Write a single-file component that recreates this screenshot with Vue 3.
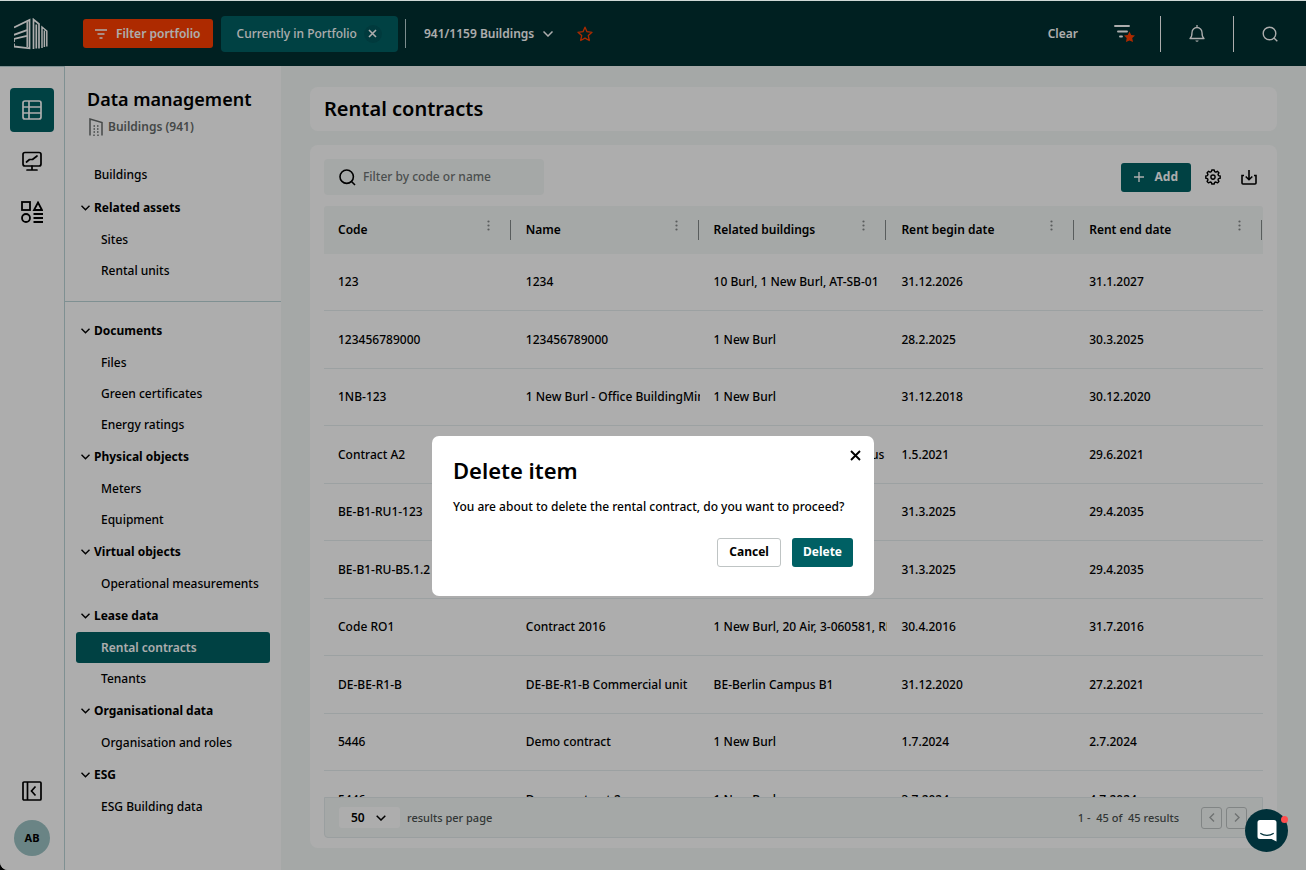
<script setup>
import { ref } from 'vue'

const groupsTop = [
  { title: 'Related assets', items: ['Sites', 'Rental units'] },
]
const groupsBottom = [
  { title: 'Documents', items: ['Files', 'Green certificates', 'Energy ratings'] },
  { title: 'Physical objects', items: ['Meters', 'Equipment'] },
  { title: 'Virtual objects', items: ['Operational measurements'] },
  { title: 'Lease data', items: ['Rental contracts', 'Tenants'] },
  { title: 'Organisational data', items: ['Organisation and roles'] },
  { title: 'ESG', items: ['ESG Building data'] },
]
const active = 'Rental contracts'

const columns = ['Code', 'Name', 'Related buildings', 'Rent begin date', 'Rent end date']
const rows = [
  ['123', '1234', '10 Burl, 1 New Burl, AT-SB-01', '31.12.2026', '31.1.2027'],
  ['123456789000', '123456789000', '1 New Burl', '28.2.2025', '30.3.2025'],
  ['1NB-123', '1 New Burl - Office BuildingMinds', '1 New Burl', '31.12.2018', '30.12.2020'],
  ['Contract A2', 'Contract A2', '1 New Burl, BE-Berlin Campus', '1.5.2021', '29.6.2021'],
  ['BE-B1-RU1-123', 'BE-B1-RU1-123', 'BE-Berlin Campus B1', '31.3.2025', '29.4.2035'],
  ['BE-B1-RU-B5.1.2', 'BE-B1-RU-B5.1.2', 'BE-Berlin Campus B1', '31.3.2025', '29.4.2035'],
  ['Code RO1', 'Contract 2016', '1 New Burl, 20 Air, 3-060581, RE-01', '30.4.2016', '31.7.2016'],
  ['DE-BE-R1-B', 'DE-BE-R1-B Commercial unit', 'BE-Berlin Campus B1', '31.12.2020', '27.2.2021'],
  ['5446', 'Demo contract', '1 New Burl', '1.7.2024', '2.7.2024'],
  ['5446', 'Demo contract 2', '1 New Burl', '3.7.2024', '4.7.2024'],
]
const search = ref('')
const pageSize = ref('50')
</script>

<template>
  <div class="app">
    <header class="topbar">
      <svg class="logo" viewBox="0 0 34 32" width="34" height="32" fill="none" stroke="#fff" stroke-width="1.8">
        <path d="M0 9.500 15.500 2V30.300L0 28.500V25.500" />
        <path d="M13.200 4V29" stroke-width="1.500" />
        <path d="M0 16.800 13 12.200M0 21 13 17.800M0 16V17.500M0 20.500V24" />
        <path d="M19.500 31V1.500L25 6V30.500M22.300 30.500V6.500" stroke-width="1.700" />
        <path d="M28 30V9L32.800 13V28.500M30.400 29V12.500" stroke-width="1.500" />
      </svg>
      <button class="filter-btn" type="button">
        <svg width="12" height="10" viewBox="0 0 12 10" stroke="#fff" stroke-width="1.300" fill="none"><path d="M0 1h12M2.500 5h7M4.500 9h3" /></svg>
        Filter portfolio
      </button>
      <div class="chip">
        <span>Currently in Portfolio</span>
        <button type="button" class="chip-x" aria-label="Remove filter">
          <svg width="9" height="9" viewBox="0 0 9 9" stroke="#fff" stroke-width="1.600"><path d="M1 1l7 7M8 1 1 8" /></svg>
        </button>
      </div>
      <span class="vline short"></span>
      <button class="buildings" type="button">
        941/1159 Buildings
        <svg width="10" height="6" viewBox="0 0 10 6" stroke="#fff" stroke-width="1.500" fill="none"><path d="M.5.5 5 5 9.500.5" /></svg>
      </button>
      <button class="icon-btn star" type="button" aria-label="Favourite">
        <svg width="16" height="16" viewBox="0 0 16 16" stroke="#ff3f00" stroke-width="1.300" fill="none" stroke-linejoin="round"><path d="M8 1.200 10 5.700l5 .6-3.700 3.300 1 4.900L8 12.100l-4.300 2.400 1-4.900L1 6.300l5-.6z" /></svg>
      </button>
      <div class="spacer"></div>
      <button class="clear" type="button">Clear</button>
      <button class="icon-btn saved" type="button" aria-label="Saved filters">
        <svg width="22" height="20" viewBox="0 0 22 20"><path d="M1 2h14M4 7.500h9M6 12.500h2" stroke="#fff" stroke-width="1.900" stroke-linecap="round" /><path d="M15.500 7.500 17.200 11l3.800.5-2.800 2.600.8 3.900-3.500-1.600-3.500 1.600.7-3.900L10 11.500l3.800-.5z" fill="#ff3f00" /></svg>
      </button>
      <span class="vline"></span>
      <button class="icon-btn wide" type="button" aria-label="Notifications">
        <svg width="16" height="18" viewBox="0 0 16 18" fill="none" stroke="#fff" stroke-width="1.300"><path d="M1 13.500c1.600-1.300 2-2.500 2-6a5 5 0 0 1 10 0c0 3.500.4 4.700 2 6zM8 0v2.500" stroke-linejoin="round" /><path d="M6.300 15.500a1.800 1.800 0 0 0 3.400 0z" fill="#fff" stroke="none" /></svg>
      </button>
      <span class="vline"></span>
      <button class="icon-btn wide" type="button" aria-label="Search">
        <svg width="16" height="16" viewBox="0 0 16 16" fill="none" stroke="#fff" stroke-width="1.400"><circle cx="7.500" cy="7.500" r="6.300" /><path d="m12 12 3.300 3.300" /></svg>
      </button>
    </header>

    <div class="body">
      <nav class="rail" aria-label="Modules">
        <a href="#" class="rail-item on" aria-label="Data management">
          <svg width="20" height="20" viewBox="0 0 20 20" fill="none" stroke="#fff" stroke-width="1.700"><rect x="1" y="1" width="18" height="18" rx="2" /><path d="M7 1v18M1 7h18M1 13h18" /></svg>
        </a>
        <a href="#" class="rail-item" aria-label="Dashboards">
          <svg width="20" height="20" viewBox="0 0 20 20" fill="none" stroke="#000" stroke-width="1.700" stroke-linecap="round" stroke-linejoin="round"><rect x="1" y="1.500" width="18" height="13.500" rx="2" /><path d="M10 15v3.500M5 19h10M4.500 11l3-2.500h3L15 5" /></svg>
        </a>
        <a href="#" class="rail-item" aria-label="Apps">
          <svg width="22" height="22" viewBox="0 0 22 22" fill="none" stroke="#000" stroke-width="1.800"><rect x="1" y="1" width="8" height="8" /><path d="M17 1.500 21 9h-8zM12.500 13h9.500M12.500 17h9.500M12.500 21h9.500" /><circle cx="5" cy="17" r="4" /></svg>
        </a>
        <div class="spacer"></div>
        <button type="button" class="rail-item" aria-label="Collapse menu">
          <svg width="20" height="20" viewBox="0 0 20 20" fill="none" stroke="#000" stroke-width="1.700"><rect x="1" y="1" width="18" height="18" rx="1" /><path d="M5.500 1v18M13.500 5.500 9.500 10l4 4.500" /></svg>
        </button>
        <button type="button" class="avatar">AB</button>
      </nav>

      <aside class="side">
        <h2>Data management</h2>
        <p class="count">
          <svg width="14" height="18" viewBox="0 0 14 18" fill="none" stroke="#666b6a" stroke-width="1.500"><path d="M1 17.500V1l12 3.500v13" /><path d="M4.500 8h1.500M8 8h1.500M4.500 11h1.500M8 11h1.500M4.500 14h1.500M8 14h1.500M5 16.500v1.500M9 16.500v1.500" stroke-width="1.400" /></svg>
          Buildings (941)
        </p>
        <a href="#" class="top-link">Buildings</a>
        <template v-for="(set, i) in [groupsTop, groupsBottom]" :key="i">
          <hr v-if="i" />
          <section v-for="g in set" :key="g.title">
            <button type="button" class="group">
              <svg width="9" height="6" viewBox="0 0 9 6" stroke="#000" stroke-width="1.400" fill="none"><path d="M.5.7 4.500 4.700 8.500.7" /></svg>
              {{ g.title }}
            </button>
            <a v-for="it in g.items" :key="it" href="#" class="item" :class="{ active: it === active }">{{ it }}</a>
          </section>
        </template>
      </aside>

      <main>
        <div class="card title"><h1>Rental contracts</h1></div>
        <div class="card list">
          <div class="tools">
            <label class="search">
              <svg width="17" height="17" viewBox="0 0 17 17" fill="none" stroke="#000" stroke-width="1.600"><circle cx="7.700" cy="7.700" r="6.700" /><path d="m12.500 12.500 3.500 3.500" /></svg>
              <input v-model="search" type="text" placeholder="Filter by code or name" aria-label="Filter by code or name" />
            </label>
            <div class="spacer"></div>
            <button type="button" class="add">
              <svg width="10" height="10" viewBox="0 0 10 10" stroke="#fff" stroke-width="1.400"><path d="M5 0v10M0 5h10" /></svg>
              Add
            </button>
            <button type="button" class="tool" aria-label="Settings">
              <svg width="16" height="16" viewBox="0 0 16 16" fill="none" stroke="#000" stroke-width="1.400" stroke-linejoin="round"><path d="M6.800 1h2.400l.4 1.700 1.300.5 1.500-.9 1.500 1.500-.9 1.500.5 1.300 1.700.4v2.200l-1.700.4-.5 1.300.9 1.500-1.500 1.500-1.500-.9-1.300.5L9.200 15H6.800l-.4-1.500-1.300-.5-1.500.9-1.500-1.500.9-1.500-.5-1.300L.8 9.200V7l1.700-.4L3 5.300l-.9-1.500 1.500-1.500 1.500.9 1.300-.5z" /><circle cx="8" cy="8.100" r="2.100" /></svg>
            </button>
            <button type="button" class="tool" aria-label="Download">
              <svg width="16" height="15" viewBox="0 0 16 15" fill="none" stroke="#000" stroke-width="1.600"><path d="M3 5.500H1V13a1 1 0 0 0 1 1h12a1 1 0 0 0 1-1V5.500h-2M8 0v9.500M4.700 6.500 8 9.700l3.300-3.200" /></svg>
            </button>
          </div>

          <div class="grid">
            <table>
              <thead>
                <tr>
                  <th v-for="c in columns" :key="c" scope="col">
                    <div class="th">
                      <span>{{ c }}</span>
                      <svg width="3" height="13" viewBox="0 0 3 13" fill="#84898a"><circle cx="1.500" cy="1.500" r="1.100" /><circle cx="1.500" cy="5.500" r="1.100" /><circle cx="1.500" cy="9.500" r="1.100" /></svg>
                    </div>
                  </th>
                </tr>
              </thead>
              <tbody>
                <tr v-for="(r, i) in rows" :key="i">
                  <td v-for="(c, j) in r" :key="j">{{ c }}</td>
                </tr>
              </tbody>
            </table>
          </div>

          <div class="pager">
            <div class="select">
              <select id="page-size" v-model="pageSize"><option>50</option><option>100</option></select>
              <svg width="10" height="6" viewBox="0 0 10 6" stroke="#000" stroke-width="1.500" fill="none"><path d="M.7.7 5 5 9.300.7" /></svg>
            </div>
            <label for="page-size">results per page</label>
            <div class="spacer"></div>
            <span class="range">1 -&nbsp; 45 of&nbsp; 45 results</span>
            <button type="button" class="pg" aria-label="Previous page" disabled><svg width="6" height="9" viewBox="0 0 6 9" fill="none" stroke="#a3a8a8" stroke-width="1.400"><path d="M5 .5 1 4.500l4 4" /></svg></button>
            <button type="button" class="pg" aria-label="Next page" disabled><svg width="6" height="9" viewBox="0 0 6 9" fill="none" stroke="#a3a8a8" stroke-width="1.400"><path d="M1 .5l4 4-4 4" /></svg></button>
          </div>
        </div>
      </main>
    </div>

    <div class="dim">
      <div class="modal" role="dialog" aria-modal="true" aria-labelledby="dlg-title">
        <button type="button" class="close" aria-label="Close">
          <svg width="11" height="11" viewBox="0 0 11 11" stroke="#000" stroke-width="1.900"><path d="M1 1l9 9M10 1l-9 9" /></svg>
        </button>
        <h3 id="dlg-title">Delete item</h3>
        <p>You are about to delete the rental contract, do you want to proceed?</p>
        <div class="actions">
          <button type="button" class="cancel">Cancel</button>
          <button type="button" class="delete">Delete</button>
        </div>
      </div>
    </div>

    <button type="button" class="chat" aria-label="Open chat">
      <svg width="20" height="22" viewBox="0 0 20 22"><path d="M3 0h14a2.500 2.500 0 0 1 2.500 2.500V21.500L14.500 19H3A2.500 2.500 0 0 1 .5 16.500v-14A2.500 2.500 0 0 1 3 0z" fill="#fff" /><path d="M3.700 13.500c3.500 2.600 9.100 2.600 12.600 0" fill="none" stroke="#00313a" stroke-width="1.200" stroke-linecap="round" /></svg>
      <span class="dot"></span>
    </button>
  </div>
</template>

<style>
body { background: #000; }
</style>

<style scoped>
* { box-sizing: border-box; }
.app {
  height: 100vh;
  display: flex;
  flex-direction: column;
  overflow: hidden;
  background: #f4f8f7;
  border-top: 1px solid #cfd8d6;
  border-bottom-left-radius: 8px;
  font-family: "Noto Sans", "Open Sans", sans-serif;
  font-size: 12px;
  font-weight: 500;
  line-height: 16px;
  color: #000;
}
h1, h2, h3, p { margin: 0; }
a { color: inherit; text-decoration: none; }
button, input, select { font: inherit; color: inherit; border: 0; padding: 0; margin: 0; background: none; }
svg { display: block; flex: none; }
.spacer { flex: 1; }

.topbar {
  display: flex;
  align-items: center;
  height: 65px;
  flex: none;
  padding: 0 0 0 14px;
  background: #003032;
  color: #fff;
  font-weight: 600;
}
.filter-btn {
  display: flex; align-items: center; gap: 9px;
  height: 29px; padding: 0 12px; margin-left: 35px;
  background: #ff3f00; border-radius: 3px; font-weight: 600;
}
.chip {
  display: flex; align-items: center; gap: 7px;
  height: 36px; margin-left: 8px; padding: 0 16px;
  background: #006064; border-radius: 4px; font-weight: 500;
}
.chip-x {
  width: 18px; height: 18px; border-radius: 50%; background: #00565a;
  display: flex; align-items: center; justify-content: center;
}
.vline { width: 1px; height: 36px; background: #fff; }
.vline.short { height: 29px; margin-left: 7px; background: #b9d0d1; }
.buildings { display: flex; align-items: center; gap: 9px; margin-left: 18px; }
.icon-btn { display: flex; align-items: center; justify-content: center; height: 36px; }
.star { margin-left: 24px; }
.clear { margin-right: 36px; }
.saved { margin-right: 24px; }
.wide { width: 72px; }

.body { flex: 1; display: flex; min-height: 0; }
.rail {
  width: 65px; flex: none; background: #fff; border-right: 1px solid #bcd5d8; border-top: 1px solid #bcd5d8;
  display: flex; flex-direction: column; align-items: center; padding: 21px 0 14px;
}
.rail-item { width: 44px; height: 44px; margin-bottom: 7px; border-radius: 4px; display: flex; align-items: center; justify-content: center; }
.rail-item.on { background: #006064; }
.avatar { width: 36px; height: 36px; border-radius: 50%; background: #9cc3c4; font-weight: 700; font-size: 11px; }

.side { width: 216px; flex: none; background: #fff; padding: 19px 0 0; }
.side h2 { font-size: 18px; line-height: 28px; font-weight: 600; padding-left: 22px; }
.count { display: flex; align-items: center; gap: 5px; padding-left: 24px; height: 28px; color: #666b6a; font-weight: 600; }
.top-link { display: flex; align-items: center; height: 32px; margin-top: 18px; padding-left: 29px; }
.group { display: flex; align-items: center; gap: 4px; width: 100%; height: 33px; padding-left: 16px; font-weight: 700; }
.item { display: flex; align-items: center; height: 31px; margin: 0 11px; padding-left: 25px; border-radius: 3px; }
.item.active { background: #006064; color: #fff; font-weight: 600; }
hr { margin: 15px 0 12px; border: 0; border-top: 1px solid #bcd5d8; }

main { flex: 1; min-width: 0; display: flex; flex-direction: column; gap: 14px; padding: 21px 29px 22px; }
.card { background: #fff; border-radius: 8px; }
.title { padding: 8px 14px; }
h1 { font-size: 20px; line-height: 28px; font-weight: 600; }
.list { flex: 1; min-height: 0; display: flex; flex-direction: column; padding: 14px 14px 10px; }
.tools { display: flex; align-items: center; }
.search { display: flex; align-items: center; gap: 7px; width: 220px; height: 36px; padding-left: 15px; background: #f4f8f7; border-radius: 4px; }
.search input { width: 160px; outline: 0; }
.search input::placeholder { color: #6e7473; opacity: 1; }
.add { display: flex; align-items: center; gap: 11px; height: 29px; padding: 0 13px; margin-right: 14px; background: #006064; color: #fff; border-radius: 3px; font-weight: 700; }
.tool { display: flex; align-items: center; justify-content: center; width: 16px; height: 29px; margin-right: 20px; }
.tool:last-child { margin-right: 6px; }

.grid { flex: 1; min-height: 0; overflow: hidden; margin-top: 11px; border-radius: 3px 3px 0 0; }
table { width: 100%; table-layout: fixed; border-collapse: separate; border-spacing: 0; }
th { height: 48px; padding: 0 1px 0 0; background: #f4f8f7; text-align: left; font-weight: 600; }
.th { display: flex; align-items: center; justify-content: space-between; height: 20px; padding: 0 20px 0 14px; border-right: 1px solid #84898a; }
.th svg { align-self: flex-start; }
td { height: 57px; padding: 0 0 0 14px; border-bottom: 1px solid #e6eeef; white-space: nowrap; overflow: hidden; }
tr:nth-child(even) td { height: 58px; }

.pager { display: flex; align-items: center; height: 41px; flex: none; padding: 0 15px 0 14px; background: #f4f8f7; border: 1px solid #e3eaec; border-radius: 0 0 4px 4px; color: #4b5150; font-size: 11px; }
.select { position: relative; display: flex; align-items: center; width: 61px; height: 21px; margin-right: 7px; background: #fff; border-radius: 3px; color: #000; }
.select select { appearance: none; width: 100%; height: 100%; padding-left: 12px; font-size: 12px; font-weight: 600; }
.select svg { position: absolute; right: 14px; pointer-events: none; }
.range { margin-right: 22px; }
.pg { width: 21px; height: 22px; border: 1px solid #bfc4c4; border-radius: 3px; display: flex; align-items: center; justify-content: center; }
.pg + .pg { margin-left: 4px; }

.dim { position: fixed; inset: 1px 0 0; background: rgba(0, 0, 0, 0.32); display: flex; align-items: center; justify-content: center; }
.modal { position: relative; width: 442px; background: #fff; border-radius: 7px; padding: 19px 21px 29px; margin-top: 160px; }
.modal h3 { font-size: 22px; line-height: 30px; font-weight: 600; }
.modal p { margin-top: 14px; white-space: nowrap; }
.close { position: absolute; top: 14px; right: 13px; }
.actions { display: flex; justify-content: flex-end; gap: 11px; margin-top: 23px; }
.actions button { height: 29px; padding: 0 11px; border-radius: 3px; font-weight: 700; }
.cancel { border: 1px solid #bfc4c4; }
.delete { background: #006064; color: #fff; }

.chat { position: fixed; right: 18px; bottom: 18px; width: 43px; height: 43px; border-radius: 50%; background: #00313a; display: flex; align-items: center; justify-content: center; }
.dot { position: absolute; top: 7px; right: 0; width: 7px; height: 7px; border-radius: 50%; background: #ff4d4d; }
</style>
